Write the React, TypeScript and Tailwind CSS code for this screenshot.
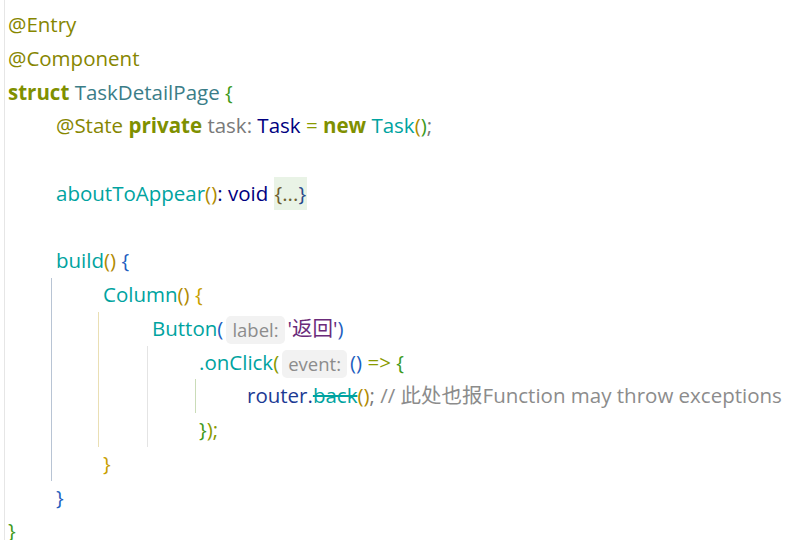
import React from 'react';

const font = "font-['Open_Sans','Noto_Sans_CJK_SC',sans-serif]";

const Line: React.FC<{ children?: React.ReactNode }> = ({ children }) => (
  <div className="h-[33.75px] whitespace-pre leading-[33.75px]">{children}</div>
);

const Hint: React.FC<{ text: string }> = ({ text }) => (
  <span className="mx-[3px] inline-block rounded-[5px] bg-[#f2f2f2] px-[6px] align-middle text-[18.5px] leading-[28px] text-[#8c8c8c]">
    {text}
  </span>
);

const App: React.FC = () => {
  return (
    <div className={`h-[540px] w-[796px] overflow-hidden bg-white ${font} text-[20.5px]`}>
      <div className="ml-[4px] h-full border-l border-[#e6e6e6] pl-[3px] pt-[8px]">
        <Line><span className="text-[#868600]">@Entry</span></Line>
        <Line><span className="text-[#868600]">@Component</span></Line>
        <Line>
          <span className="font-bold text-[#7f9000]">struct</span>{' '}
          <span className="text-[#3b7d88]">TaskDetailPage</span>{' '}
          <span className="text-[#3d9a1c]">{'{'}</span>
        </Line>

        {/* struct body */}
        <div className="pl-[48px]">
          <Line>
            <span className="text-[#868600]">@State</span>{' '}
            <span className="font-bold text-[#7f9000]">private</span>{' '}
            <span className="text-[#7a7a7a]">task: </span>
            <span className="text-[#000080]">Task</span>
            <span className="text-[#8a9a00]"> = </span>
            <span className="font-bold text-[#7f9000]">new</span>{' '}
            <span className="text-[#00a3a0]">Task</span>
            <span className="text-[#b08a00]">(</span>
            <span className="text-[#3d9a1c]">)</span>
            <span className="text-[#7a7a7a]">;</span>
          </Line>
          <Line />
          <Line>
            <span className="text-[#00a3a0]">aboutToAppear</span>
            <span className="text-[#b08a00]">()</span>
            <span className="text-[#000080]">: void </span>
            <span className="inline-block h-[33px] bg-[#e9f3e6] px-[1px] align-top text-[#6d5d2d]">
              {'{...'}<span className="text-[#2a4a8a]">{'}'}</span>
            </span>
          </Line>
          <Line />
          <Line>
            <span className="text-[#00a3a0]">build</span>
            <span className="text-[#b08a00]">()</span>{' '}
            <span className="text-[#1f5fc0]">{'{'}</span>
          </Line>

          {/* build body */}
          <div className="-ml-[5px] border-l border-[#b8c4d4] pl-[51px]">
            <Line>
              <span className="text-[#00a3a0]">Column</span>
              <span className="text-[#b08a00]">()</span>{' '}
              <span className="text-[#c8a000]">{'{'}</span>
            </Line>

            {/* Column body */}
            <div className="-ml-[5px] border-l border-[#eadfb4] pl-[53px]">
              <Line>
                <span className="text-[#00a3a0]">Button</span>
                <span className="text-[#1f5fc0]">(</span>
                <Hint text="label:" />
                <span className="text-[#6b2b7a]">'返回'</span>
                <span className="text-[#1f5fc0]">)</span>
              </Line>

              {/* Button chain */}
              <div className="-ml-[5px] border-l border-[#e4e4e4] pl-[51px]">
                <Line>
                  <span className="text-[#00a3a0]">.onClick</span>
                  <span className="text-[#8a9a00]">(</span>
                  <Hint text="event:" />
                  <span className="text-[#1f5fc0]">()</span>
                  <span className="text-[#8a9a00]"> =&gt; </span>
                  <span className="text-[#3d9a1c]">{'{'}</span>
                </Line>

                {/* onClick body */}
                <div className="-ml-[4px] border-l border-[#cadcb8] pl-[51px]">
                  <Line>
                    <span className="text-[#1c3a94]">router.</span>
                    <span className="text-[#00a3a0] line-through">back</span>
                    <span className="text-[#b08a00]">()</span>
                    <span className="text-[#7a7a7a]">; </span>
                    <span className="text-[#8c8c8c]">// 此处也报Function may throw exceptions</span>
                  </Line>
                </div>

                <Line><span className="text-[#3d9a1c]">{'}'}</span><span className="text-[#8a9a00]">);</span></Line>
              </div>
            </div>

            <Line><span className="text-[#c8a000]">{'}'}</span></Line>
          </div>

          <Line><span className="text-[#1f5fc0]">{'}'}</span></Line>
        </div>

        <Line><span className="text-[#3d9a1c]">{'}'}</span></Line>
      </div>
    </div>
  );
};

export default App;
